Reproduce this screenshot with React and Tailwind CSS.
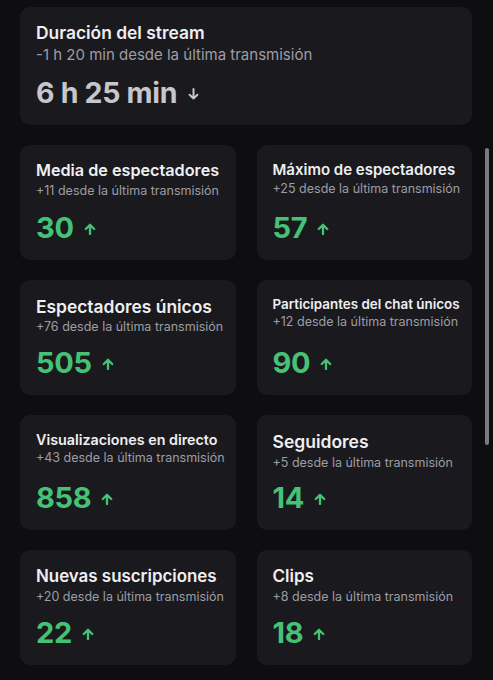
import React from "react";

const ArrowUp = () => (
  <svg width="12" height="12" viewBox="0 0 12 12" fill="none" className="ml-[10px] mt-[2px]">
    <path d="M6 11V1.8M1.8 6L6 1.8L10.2 6" stroke="#45c276" strokeWidth="2.3" strokeLinecap="round" strokeLinejoin="round" />
  </svg>
);

const ArrowDown = () => (
  <svg width="11" height="12" viewBox="0 0 11 12" fill="none" className="ml-[11px] mt-[1px]">
    <path d="M5.5 1V10.5M1.6 6.8L5.5 10.5L9.4 6.8" stroke="#c6c6cc" strokeWidth="2" strokeLinecap="round" strokeLinejoin="round" />
  </svg>
);

const stats = [
  { title: "Media de espectadores", size: "text-[16.2px]", sub: "+11 desde la última transmisión", value: "30" },
  { title: "Máximo de espectadores", size: "text-[15px]", sub: "+25 desde la última transmisión", value: "57" },
  { title: "Espectadores únicos", size: "text-[17.4px]", sub: "+76 desde la última transmisión", value: "505" },
  { title: "Participantes del chat únicos", size: "text-[13.4px]", sub: "+12 desde la última transmisión", value: "90" },
  { title: "Visualizaciones en directo", size: "text-[14.3px]", sub: "+43 desde la última transmisión", value: "858" },
  { title: "Seguidores", size: "text-[17.5px]", sub: "+5 desde la última transmisión", value: "14" },
  { title: "Nuevas suscripciones", size: "text-[16.9px]", sub: "+20 desde la última transmisión", value: "22" },
  { title: "Clips", size: "text-[17px]", sub: "+8 desde la última transmisión", value: "18" },
];

function Card({ s }) {
  return (
    <div className="h-[115px] rounded-[10px] bg-[#1a1a1e] px-4 pt-[15px] flex flex-col">
      <div className={`${s.size} font-semibold leading-[1.35] text-[#efeff1] whitespace-nowrap`}>{s.title}</div>
      <div className="text-[12.5px] leading-[18px] text-[#9d9da5] whitespace-nowrap">{s.sub}</div>
      <div className="mt-auto mb-[14px] flex items-center">
        <span className="text-[29px] font-bold leading-[36px] text-[#45c276] tracking-[-0.3px]">{s.value}</span>
        <ArrowUp />
      </div>
    </div>
  );
}

export default function App() {
  return (
    <div
      className="relative min-h-[680px] w-[493px] bg-[#0e0e10] pl-5 pr-[21px] pt-[7px] pb-4"
      style={{ fontFamily: "Inter, 'Noto Sans', sans-serif" }}
    >
      <div className="h-[118px] rounded-[10px] bg-[#1a1a1e] px-4 pt-[14px] flex flex-col">
        <div className="text-[17.4px] font-semibold leading-[23px] text-[#efeff1]">Duración del stream</div>
        <div className="text-[15px] leading-[21px] text-[#9d9da5]">-1 h 20 min desde la última transmisión</div>
        <div className="mt-auto mb-[14px] flex items-center">
          <span className="text-[28.5px] font-bold leading-[36px] text-[#c6c6cc] tracking-[-0.3px]">6 h 25 min</span>
          <ArrowDown />
        </div>
      </div>
      <div className="mt-5 grid grid-cols-2 gap-x-[21px] gap-y-5">
        {stats.map((s) => (
          <Card key={s.title} s={s} />
        ))}
      </div>
      <div className="absolute left-[485px] top-[148px] h-[297px] w-[4px] rounded-full bg-[#7a7a80]" />
    </div>
  );
}
